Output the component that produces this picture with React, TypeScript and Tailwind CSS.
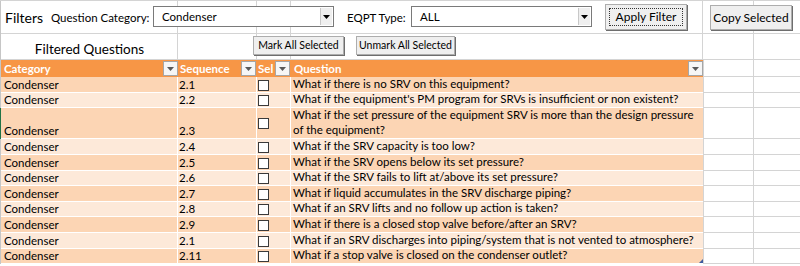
import React from 'react'

type Row = { seq: string; q: string[]; tall?: boolean }

const rows: Row[] = [
  { seq: '2.1', q: ['What if there is no SRV on this equipment?'] },
  { seq: '2.2', q: ["What if the equipment's PM program for SRVs is insufficient or non existent?"] },
  {
    seq: '2.3',
    q: ['What if the set pressure of the equipment SRV is more than the design pressure', 'of the equipment?'],
    tall: true,
  },
  { seq: '2.4', q: ['What if the SRV capacity is too low?'] },
  { seq: '2.5', q: ['What if the SRV opens below its set pressure?'] },
  { seq: '2.6', q: ['What if the SRV fails to lift at/above its set pressure?'] },
  { seq: '2.7', q: ['What if liquid accumulates in the SRV discharge piping?'] },
  { seq: '2.8', q: ['What if an SRV lifts and no follow up action is taken?'] },
  { seq: '2.9', q: ['What if there is a closed stop valve before/after an SRV?'] },
  { seq: '2.1', q: ['What if an SRV discharges into piping/system that is not vented to atmosphere?'] },
  { seq: '2.11', q: ['What if a stop valve is closed on the condenser outlet?'] },
]

function Caret({ color = '#000' }: { color?: string }) {
  return (
    <svg width="7" height="4" viewBox="0 0 7 4">
      <path d="M0 0h7L3.5 4z" fill={color} />
    </svg>
  )
}

function Combo({ value }: { value: string }) {
  return (
    <div className="flex h-[21px] w-[181px] items-stretch border border-[#7a7a7a] bg-white">
      <span className="flex flex-1 items-center pl-[8px] text-[11.5px] text-black">{value}</span>
      <span className="my-[1px] mr-[1px] flex w-[12px] items-center justify-center border-l border-[#c8c8c8] bg-[#efefef]">
        <Caret />
      </span>
    </div>
  )
}

function FilterBtn() {
  return (
    <span className="flex h-[15px] w-[15px] shrink-0 items-center justify-center border border-[#a6a6a6] bg-[#f6f6f6]">
      <Caret color="#595959" />
    </span>
  )
}

function Check() {
  return <span className="block h-[11px] w-[11px] border-[1.5px] border-[#3a3a3a] bg-white" />
}

// sheet gridline cells behind the floating controls
function GridCells({ h }: { h: string }) {
  return (
    <div className={`flex ${h}`}>
      <div className="w-[177px] border-r border-b border-[#d4d4d4]" />
      <div className="w-[79px] border-r border-b border-[#d4d4d4]" />
      <div className="w-[34px] border-r border-b border-[#d4d4d4]" />
      <div className="w-[412px] border-r border-b border-[#d4d4d4]" />
      <div className="w-[51px] border-r border-b border-[#d4d4d4]" />
      <div className="flex-1 border-b border-[#d4d4d4]" />
    </div>
  )
}

export default function App() {
  return (
    <div className="h-[266px] w-[800px] overflow-hidden border-t border-[#d4d4d4] bg-white font-['Lato',sans-serif] text-[11.5px] text-black">
      {/* Row 1 - filters */}
      <div className="relative border-l border-[#c6c6c6]">
        <GridCells h="h-[33px]" />
        <div className="absolute inset-0 flex items-center whitespace-nowrap">
          <span className="ml-[4px] w-[46px] text-[14px]">Filters</span>
          <span className="w-[102px] text-[11.5px]">Question Category:</span>
          <div className="-mt-[2px]">
            <Combo value="Condenser" />
          </div>
          <span className="ml-[13px] w-[64px] text-[11.5px]">EQPT Type:</span>
          <div className="-mt-[2px]">
            <Combo value="ALL" />
          </div>
          <button className="ml-[13px] -mt-[1px] flex h-[26px] w-[82px] items-center justify-center border border-[#adadad] bg-[#efefef] p-[3px] shadow-[1px_1px_0_#6e6e6e]">
            <span className="flex h-full w-full items-center justify-center border border-dotted border-[#333] text-[12px]">
              Apply Filter
            </span>
          </button>
          <button className="ml-[23px] flex h-[25px] w-[82px] items-center justify-center border border-[#adadad] bg-[#efefef] text-[12px] shadow-[1px_1px_0_#6e6e6e]">
            Copy Selected
          </button>
        </div>
      </div>

      {/* Row 2 - title and mark buttons */}
      <div className="relative border-l border-[#c6c6c6]">
        <GridCells h="h-[26px]" />
        <div className="absolute inset-0 flex items-start whitespace-nowrap">
          <span className="mt-[5px] w-[177px] text-center text-[13.5px]">Filtered Questions</span>
          <button className="mt-[2px] ml-[75px] flex h-[19px] w-[91px] items-center justify-center border border-[#adadad] bg-[#efefef] text-[10.5px] shadow-[1px_1px_0_#6e6e6e]">
            Mark All Selected
          </button>
          <button className="mt-[2px] ml-[12px] flex h-[19px] w-[99px] items-center justify-center border border-[#adadad] bg-[#efefef] text-[10.5px] shadow-[1px_1px_0_#6e6e6e]">
            Unmark All Selected
          </button>
        </div>
      </div>

      {/* Table header */}
      <div className="flex h-[17px] border-l border-[#c6c6c6] font-bold text-white">
        <div className="flex w-[177px] items-center justify-between bg-[#f79646] pl-[3px]">
          Category
          <FilterBtn />
        </div>
        <div className="flex w-[79px] items-center justify-between border-l border-[#f79646] bg-[#f79646] pl-[1px] pr-[1px]">
          Sequence
          <FilterBtn />
        </div>
        <div className="flex w-[34px] items-center justify-between bg-[#f79646] pl-[1px] pr-[1px]">
          Sel
          <FilterBtn />
        </div>
        <div className="flex w-[412px] items-center justify-between bg-[#f79646] pl-[3px]">
          Question
          <FilterBtn />
        </div>
        <div className="w-[51px] border-r border-b border-l border-[#d4d4d4] bg-white" />
        <div className="flex-1 border-b border-[#d4d4d4] bg-white" />
      </div>

      {/* Table body */}
      {rows.map((r, i) => {
        const band = i % 2 === 0 ? 'bg-[#fcd5b4]' : 'bg-[#fde9d9]'
        const last = i === rows.length - 1
        return (
          <div
            key={i}
            className={`flex border-l ${r.tall ? 'h-[31.2px] border-[#217346]' : 'h-[15.6px] border-[#c6c6c6]'}`}
          >
            <div className={`flex w-[177px] items-end border-r border-b border-white pb-[1px] pl-[3px] leading-[13px] ${band}`}>
              Condenser
            </div>
            <div className={`flex w-[79px] items-end border-r border-b border-white pb-[1px] pl-[1px] leading-[13px] ${band}`}>
              {r.seq}
            </div>
            <div
              className={`flex w-[34px] border-r border-b border-white pl-[1px] ${r.tall ? 'items-center' : 'items-end pb-[1px]'} ${band}`}
            >
              <Check />
            </div>
            <div
              className={`relative flex w-[412px] flex-col justify-end border-b border-white pb-[1px] pl-[2px] leading-[15px] ${band}`}
            >
              {r.q.map((l, j) => (
                <span key={j} className="whitespace-nowrap">
                  {l}
                </span>
              ))}
              {last && (
                <svg className="absolute right-0 bottom-0" width="4" height="4" viewBox="0 0 4 4">
                  <path d="M4 0v4H0z" fill="#3d5a9e" />
                </svg>
              )}
            </div>
            <div className="w-[51px] border-r border-b border-l border-[#d4d4d4] bg-white" />
            <div className="flex-1 border-b border-[#d4d4d4] bg-white" />
          </div>
        )
      })}
    </div>
  )
}
